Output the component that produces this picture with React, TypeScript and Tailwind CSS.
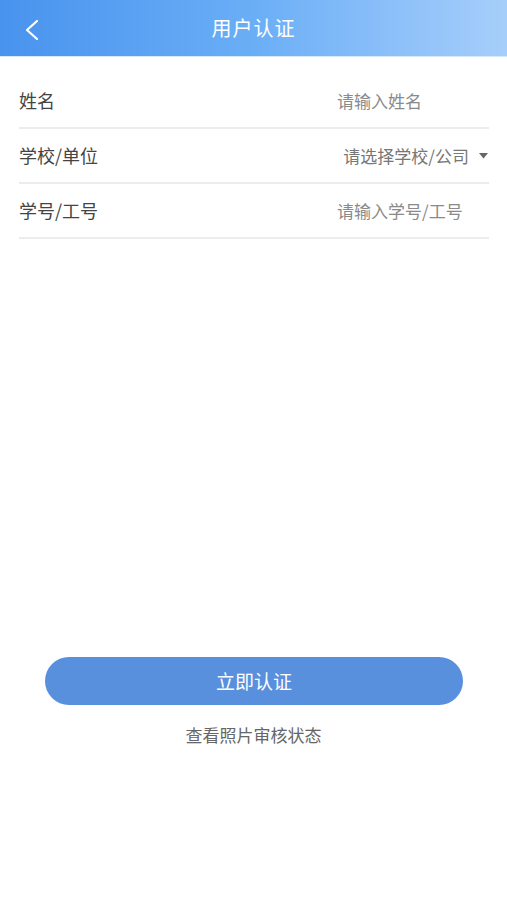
import React from "react";

const font = { fontFamily: '"Noto Sans CJK SC", "Noto Sans", sans-serif' };

export default function App() {
  return (
    <div className="w-[507px] h-[900px] bg-white flex flex-col" style={font}>
      <div className="h-[57px] relative flex items-center justify-center bg-gradient-to-r from-[#4893ee] via-[#6aaef6] to-[#a6cefa] border-b border-[#d6e8fb]">
        <svg className="absolute left-[24px] top-[19px]" width="16" height="22" viewBox="0 0 16 22" fill="none">
          <path d="M13 2 L3 11 L13 20" stroke="white" strokeWidth="2.2" strokeLinecap="round" strokeLinejoin="round" />
        </svg>
        <span className="text-white text-[20px] leading-none tracking-[1px]">用户认证</span>
      </div>
      <div className="mt-[17px] ml-[19px] mr-[18px] flex flex-col">
        <div className="h-[55px] flex items-center border-b-2 border-[#ececec]">
          <span className="text-[18px] text-[#444] w-[318px]">姓名</span>
          <span className="text-[17px] text-[#8a8a8a]">请输入姓名</span>
        </div>
        <div className="h-[55px] flex items-center border-b-2 border-[#ececec]">
          <span className="text-[18px] text-[#444] flex-1">学校/单位</span>
          <span className="text-[17px] text-[#777]">请选择学校/公司</span>
          <svg className="ml-[10px] mr-[1px]" width="9" height="6" viewBox="0 0 9 6">
            <path d="M0 0 L9 0 L4.5 5.5 Z" fill="#666" />
          </svg>
        </div>
        <div className="h-[55px] flex items-center border-b-2 border-[#ececec]">
          <span className="text-[18px] text-[#444] w-[318px]">学号/工号</span>
          <span className="text-[17px] text-[#8a8a8a]">请输入学号/工号</span>
        </div>
      </div>
      <div className="mt-[418px] pl-[45px] pr-[44px]">
        <div className="h-[48px] rounded-full bg-[#5890dd] flex items-center justify-center">
          <span className="text-white text-[19px]">立即认证</span>
        </div>
      </div>
      <div className="mt-[17px] text-center text-[17px] text-[#666]">查看照片审核状态</div>
    </div>
  );
}
